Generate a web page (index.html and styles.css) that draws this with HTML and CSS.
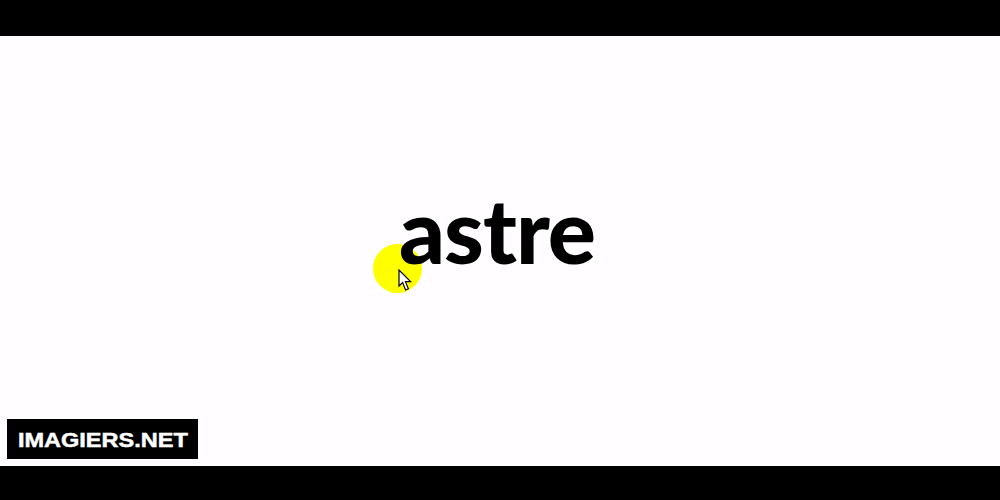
FILE: index.html
```html
<!DOCTYPE html>
<html lang="fr">
<head>
<meta charset="utf-8">
<title>astre</title>
<link rel="stylesheet" href="styles.css">
</head>
<body>
<div class="bar bar-top"></div>
<main class="stage">
  <div class="pointer">
    <svg class="cursor" width="14" height="23" viewBox="0 0 14 23"><path d="M1 1 L1 17 L4.6 13.6 L7.6 21 L10.4 19.8 L7.4 12.7 L12.6 12.7 Z" fill="#fff" stroke="#000" stroke-width="1.2" stroke-linejoin="miter"/></svg>
  </div>
  <div class="word-area"><h1 class="word">astre</h1></div>
  <div class="logo"><span class="logo-text">IMAGIERS.NET</span></div>
</main>
<div class="bar bar-bottom"></div>
</body>
</html>
```
FILE: styles.css
```css
html, body { margin: 0; padding: 0; }
body { width: 1000px; height: 500px; display: flex; flex-direction: column; overflow: hidden; background: #fffdff; }
.bar { background: #000; }
.bar-top { height: 36px; }
.bar-bottom { height: 34px; }
.stage { flex: 1; position: relative; display: flex; flex-direction: column; padding: 0 0 7px 7px; box-sizing: border-box; }
.word-area { flex: 1; display: flex; justify-content: center; align-items: flex-start; padding-top: 143px; padding-right: 13px; box-sizing: border-box; }
.word { position: relative; margin: 0; font-family: Lato, "Open Sans", sans-serif; font-weight: 900; font-size: 90px; line-height: 100px; letter-spacing: -1px; color: #000; }
.logo { align-self: flex-start; display: flex; justify-content: center; width: 191px; height: 40px; background: #000; }
.logo-text { color: #fff; font-family: "Liberation Sans", Arial, sans-serif; font-weight: 700; font-size: 21px; line-height: 42px; white-space: nowrap; transform: scaleX(1.12); -webkit-text-stroke: 0.5px #fff; }
.pointer { position: absolute; left: 373px; top: 208px; width: 49px; height: 49px; border-radius: 50%; background: #ffff00; }
.cursor { position: absolute; left: 24.5px; top: 24.5px; }
```
